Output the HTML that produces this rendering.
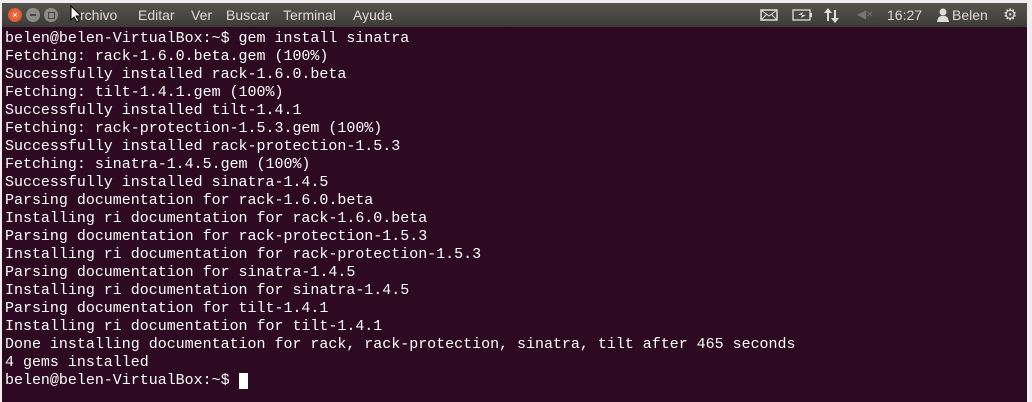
<!DOCTYPE html><html><head><style>
body{margin:0;width:1032px;height:402px;background:#f0eef0;overflow:hidden;position:relative;font-family:"Liberation Sans",sans-serif}
#bar{position:absolute;left:2px;top:3px;width:1025px;height:24px;background:linear-gradient(#55544f,#3c3b37);color:#dfdbd2;font-size:14px}
#term{position:absolute;left:2px;top:27px;width:1025px;height:375px;background:#2d0922}
pre{margin:0;position:absolute;left:5px;top:30px;font-family:"Liberation Mono",monospace;font-size:14.98px;line-height:18px;color:#fff}
.b{position:absolute;top:5px;width:14px;height:14px;border-radius:50%}
.m{position:absolute;top:4px}
</style></head><body>
<div id="bar">
<div class="b" style="left:6px;background:radial-gradient(#f27a4e,#d7461f);color:#fff;font-size:9px;text-align:center;line-height:14px">×</div>
<div class="b" style="left:24px;background:#8d8b85"><div style="position:absolute;left:4px;top:6px;width:6px;height:2px;background:#444"></div></div>
<div class="b" style="left:42px;background:#8d8b85"><div style="position:absolute;left:4px;top:4px;width:5px;height:5px;border:1px solid #444"></div></div>
<svg style="position:absolute;left:68px;top:2px" width="12" height="18"><path d="M1 1V15L4 12 7 17 9 16 6 11H11Z" fill="#fff" stroke="#000"/></svg>
<span class="m" style="left:78px">rchivo</span>
<span class="m" style="left:136px">Editar</span>
<span class="m" style="left:189px">Ver</span>
<span class="m" style="left:224px">Buscar</span>
<span class="m" style="left:281px">Terminal</span>
<span class="m" style="left:351px">Ayuda</span>
<svg style="position:absolute;left:758px;top:6px" width="18" height="12"><rect x="1" y="1" width="16" height="10" fill="none" stroke="#ddd" stroke-width="1.5"/><path d="M1 1 9 7 17 1M1 11 7 5M17 11 11 5" stroke="#ddd" fill="none"/></svg>
<svg style="position:absolute;left:790px;top:6px" width="22" height="12"><rect x="1" y="1" width="17" height="10" fill="none" stroke="#ddd" stroke-width="1.3"/><rect x="18" y="4" width="2" height="4" fill="#ddd"/><path d="M6 6 11 3 10 6 14 6 9 9 10 6Z" fill="#ddd"/></svg>
<svg style="position:absolute;left:821px;top:4px" width="18" height="17"><path d="M5 1 1 6H4V14H6V6H9Z M12 16 16 11H13V3H11V11H8Z" fill="#ddd"/></svg>
<span class="m" style="left:855px;color:#77756f;font-size:12px">◀×</span>
<span class="m" style="left:885px">16:27</span>
<svg style="position:absolute;left:935px;top:5px" width="12" height="14"><circle cx="6" cy="4" r="3.5" fill="#ddd"/><path d="M0 14Q1 7 6 8Q11 7 12 14Z" fill="#ddd"/></svg>
<span class="m" style="left:950px">Belen</span>
<span class="m" style="left:1001px;font-size:16px;top:2px">⚙</span>
</div>
<div id="term"></div>
<pre>belen@belen-VirtualBox:~$ gem install sinatra
Fetching: rack-1.6.0.beta.gem (100%)
Successfully installed rack-1.6.0.beta
Fetching: tilt-1.4.1.gem (100%)
Successfully installed tilt-1.4.1
Fetching: rack-protection-1.5.3.gem (100%)
Successfully installed rack-protection-1.5.3
Fetching: sinatra-1.4.5.gem (100%)
Successfully installed sinatra-1.4.5
Parsing documentation for rack-1.6.0.beta
Installing ri documentation for rack-1.6.0.beta
Parsing documentation for rack-protection-1.5.3
Installing ri documentation for rack-protection-1.5.3
Parsing documentation for sinatra-1.4.5
Installing ri documentation for sinatra-1.4.5
Parsing documentation for tilt-1.4.1
Installing ri documentation for tilt-1.4.1
Done installing documentation for rack, rack-protection, sinatra, tilt after 465 seconds
4 gems installed
belen@belen-VirtualBox:~$ <span style="background:#fff"> </span></pre>
</body></html>
